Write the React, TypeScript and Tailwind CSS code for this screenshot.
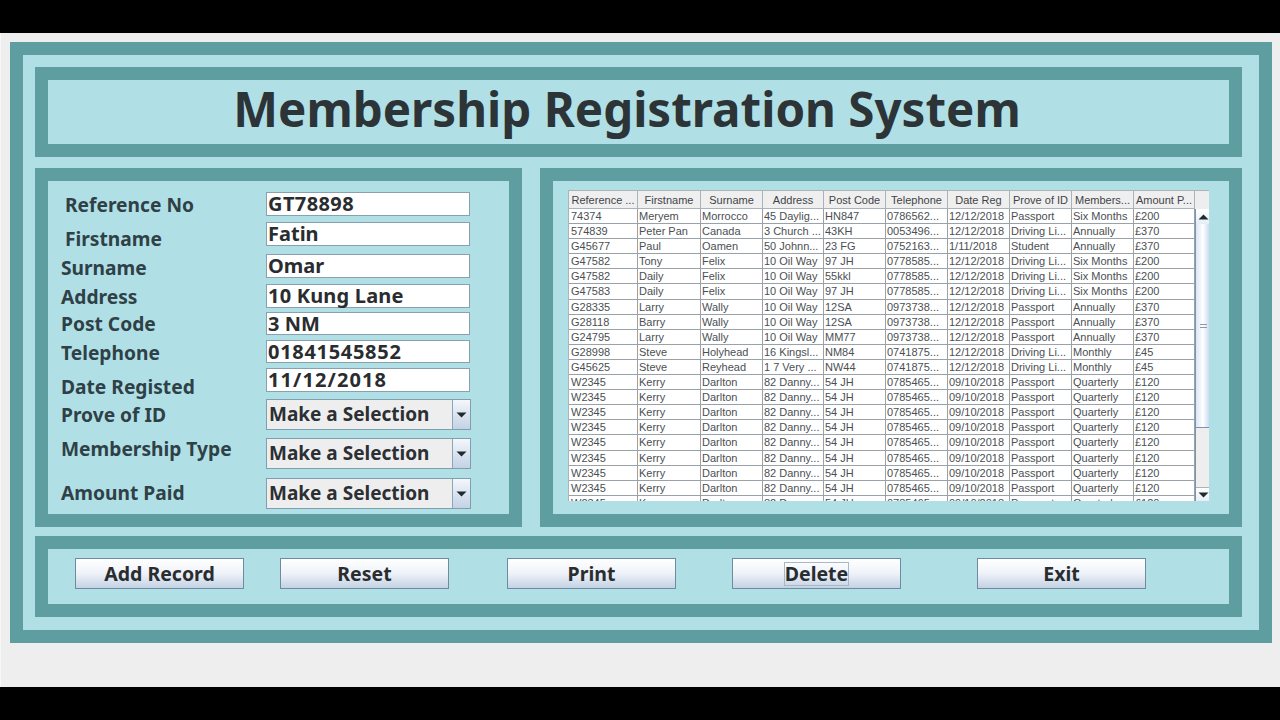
const sans = "font-['Noto_Sans',sans-serif]";

const columns = [
  { name: 'Reference ...', w: 'w-[69px]' },
  { name: 'Firstname', w: 'w-[63px]' },
  { name: 'Surname', w: 'w-[62px]' },
  { name: 'Address', w: 'w-[61px]' },
  { name: 'Post Code', w: 'w-[62px]' },
  { name: 'Telephone', w: 'w-[62px]' },
  { name: 'Date Reg', w: 'w-[62px]' },
  { name: 'Prove of ID', w: 'w-[62px]' },
  { name: 'Members...', w: 'w-[62px]' },
  { name: 'Amount P...', w: 'w-[61px]' },
];

const kerry = ['W2345', 'Kerry', 'Darlton', '82 Danny...', '54 JH', '0785465...', '09/10/2018', 'Passport', 'Quarterly', '£120'];

const rows = [
  ['74374', 'Meryem', 'Morrocco', '45 Daylig...', 'HN847', '0786562...', '12/12/2018', 'Passport', 'Six Months', '£200'],
  ['574839', 'Peter Pan', 'Canada', '3 Church ...', '43KH', '0053496...', '12/12/2018', 'Driving Li...', 'Annually', '£370'],
  ['G45677', 'Paul', 'Oamen', '50 Johnn...', '23 FG', '0752163...', '1/11/2018', 'Student', 'Annually', '£370'],
  ['G47582', 'Tony', 'Felix', '10 Oil Way', '97 JH', '0778585...', '12/12/2018', 'Driving Li...', 'Six Months', '£200'],
  ['G47582', 'Daily', 'Felix', '10 Oil Way', '55kkl', '0778585...', '12/12/2018', 'Driving Li...', 'Six Months', '£200'],
  ['G47583', 'Daily', 'Felix', '10 Oil Way', '97 JH', '0778585...', '12/12/2018', 'Driving Li...', 'Six Months', '£200'],
  ['G28335', 'Larry', 'Wally', '10 Oil Way', '12SA', '0973738...', '12/12/2018', 'Passport', 'Annually', '£370'],
  ['G28118', 'Barry', 'Wally', '10 Oil Way', '12SA', '0973738...', '12/12/2018', 'Passport', 'Annually', '£370'],
  ['G24795', 'Larry', 'Wally', '10 Oil Way', 'MM77', '0973738...', '12/12/2018', 'Passport', 'Annually', '£370'],
  ['G28998', 'Steve', 'Holyhead', '16 Kingsl...', 'NM84', '0741875...', '12/12/2018', 'Driving Li...', 'Monthly', '£45'],
  ['G45625', 'Steve', 'Reyhead', '1 7 Very ...', 'NW44', '0741875...', '12/12/2018', 'Driving Li...', 'Monthly', '£45'],
  kerry, kerry, kerry, kerry, kerry, kerry, kerry, kerry, kerry,
];

const labels = [
  { text: 'Reference No', cls: 'mt-[12px] ml-[4px] h-[24px]' },
  { text: 'Firstname', cls: 'mt-[10px] ml-[4px] h-[24px]' },
  { text: 'Surname', cls: 'mt-[5px] h-[24px]' },
  { text: 'Address', cls: 'mt-[5px] h-[24px]' },
  { text: 'Post Code', cls: 'mt-[3px] h-[24px]' },
  { text: 'Telephone', cls: 'mt-[5px] h-[24px]' },
  { text: 'Date Registed', cls: 'mt-[10px] h-[24px]' },
  { text: 'Prove of ID', cls: 'mt-[4px] h-[24px]' },
  { text: 'Membership Type', cls: 'mt-[10px] h-[24px]' },
  { text: 'Amount Paid', cls: 'mt-[20px] h-[24px]' },
];

const fields = [
  { text: 'GT78898', cls: 'mt-[11px] h-[24px] tracking-[0.4px]' },
  { text: 'Fatin', cls: 'mt-[6px] h-[24px]' },
  { text: 'Omar', cls: 'mt-[8px] h-[24px]' },
  { text: '10 Kung Lane', cls: 'mt-[6px] h-[24px] tracking-[0.2px]' },
  { text: '3 NM', cls: 'mt-[4px] h-[23px]' },
  { text: '01841545852', cls: 'mt-[5px] h-[23px] tracking-[0.7px]' },
  { text: '11/12/2018', cls: 'mt-[5px] h-[24px] tracking-[1.1px]' },
];

const selects = ['mt-[7px]', 'mt-[8px]', 'mt-[9px]'];

const buttons = [
  { text: 'Add Record', cls: 'ml-[27px]' },
  { text: 'Reset', cls: 'ml-[36px]' },
  { text: 'Print', cls: 'ml-[58px]' },
  { text: 'Delete', cls: 'ml-[56px]', focus: true },
  { text: 'Exit', cls: 'ml-[76px]' },
];

function Caret() {
  return (
    <svg width="11" height="6" viewBox="0 0 11 6" className="fill-[#1f2a30]">
      <path d="M0.5 0.5H10.5L5.5 5.5Z" />
    </svg>
  );
}

function Select({ className }: { className: string }) {
  return (
    <div className={`flex h-[31px] w-[205px] border border-[#7f9fb0] bg-[#eeeeee] ${className}`}>
      <div className={`flex-1 pl-[2px] text-[19px] leading-[29px] font-bold whitespace-nowrap text-[#2c2f33] ${sans}`}>Make a Selection</div>
      <div className="flex w-[18px] items-center justify-center border-l border-[#8aa6b8] bg-gradient-to-b from-[#f4f7fb] to-[#c3d2e4]">
        <Caret />
      </div>
    </div>
  );
}

export default function App() {
  return (
    <div className="flex h-[720px] w-[1280px] flex-col overflow-hidden bg-black">
      <div className="mt-[33px] h-[654px] border-l border-[#f8f8f8] bg-[#eeeeee] pt-[9px] pl-[9px]">
        <div className="h-[601px] w-[1262px] border-[13px] border-[#5f9ea0] bg-[#b0e0e6] pt-[12px] pl-[12px]">
          <div className="flex h-[90px] w-[1207px] items-center justify-center border-[13px] border-[#5f9ea0] pr-[23px] pb-[7px]">
            <h1 className={`text-[47.5px] leading-none font-bold text-[#2c3437] ${sans}`}>Membership Registration System</h1>
          </div>

          <div className="mt-[11px] flex items-start">
            <div className="flex h-[359px] w-[487px] border-[13px] border-[#5f9ea0]">
              <div className={`ml-[13px] w-[205px] text-[19.2px] leading-[24px] font-bold text-[#2f4046] ${sans}`}>
                {labels.map((l) => (
                  <div key={l.text} className={l.cls}>{l.text}</div>
                ))}
              </div>
              <div className="flex flex-col">
                {fields.map((f) => (
                  <div
                    key={f.text}
                    className={`w-[204px] border border-[#8aa0ae] bg-white pl-[1px] text-[20px] leading-[21px] font-bold text-[#2a2d30] ${sans} ${f.cls}`}
                  >
                    {f.text}
                  </div>
                ))}
                {selects.map((c) => (
                  <Select key={c} className={c} />
                ))}
              </div>
            </div>

            <div className="ml-[18px] flex h-[359px] w-[702px] border-[13px] border-[#5f9ea0] pt-[9px] pl-[15px]">
              <div className="h-[311px] w-[641px] overflow-hidden border-t border-l border-[#aab4b9] bg-white font-['Liberation_Sans',sans-serif] text-[11px]">
                <div className="flex h-[18px]">
                  {columns.map((c) => (
                    <div
                      key={c.name}
                      className={`${c.w} shrink-0 border-r border-b border-[#a9b4ba] bg-[#efefef] text-center leading-[19px] whitespace-nowrap text-[#3f4448]`}
                    >
                      {c.name}
                    </div>
                  ))}
                  <div className="w-[15px] shrink-0 border-r border-[#aab4b9] bg-[#eeeeee]" />
                </div>
                <div className="flex">
                  <div className="h-[293px] w-[626px] shrink-0 overflow-hidden">
                    {rows.map((row, i) => (
                      <div key={i} className="flex h-[15.1px]">
                        {row.map((cell, j) => (
                          <div
                            key={j}
                            className={`${columns[j].w} shrink-0 overflow-hidden border-r border-b border-[#9aa2a8] leading-[15px] whitespace-nowrap text-[#4b4f53] ${j === 0 ? 'pl-[2px]' : 'pl-[1px]'}`}
                          >
                            {cell}
                          </div>
                        ))}
                      </div>
                    ))}
                  </div>
                  <div className="flex h-[293px] w-[15px] shrink-0 flex-col border-l border-[#7f92b0] bg-[#eeeeee]">
                    <div className="flex h-[15px] items-center justify-center bg-gradient-to-b from-white to-[#e6edf5]">
                      <svg width="11" height="6" viewBox="0 0 11 6" className="fill-[#1f2a30]"><path d="M0.5 5.5H10.5L5.5 0.5Z" /></svg>
                    </div>
                    <div className="flex h-[204px] items-center justify-center border-b border-[#7f92b0] bg-gradient-to-r from-[#dbe6f6] via-white to-[#c6d6ec]">
                      <div className="h-[4px] w-[7px] border-y border-[#8d9aac]" />
                    </div>
                    <div className="flex-1" />
                    <div className="flex h-[15px] items-center justify-center border-t border-[#aab4b9] bg-gradient-to-b from-white to-[#e6edf5]">
                      <Caret />
                    </div>
                  </div>
                </div>
              </div>
            </div>
          </div>

          <div className="mt-[9px] flex h-[81px] w-[1207px] items-center border-[13px] border-[#5f9ea0] pb-[6px]">
            {buttons.map((b) => (
              <button
                key={b.text}
                className={`flex h-[31px] w-[169px] items-center justify-center border border-[#6f8ba0] bg-gradient-to-b from-white via-[#eef2f8] to-[#c3d2e4] text-[19.5px] font-bold text-[#2a2d30] ${sans} ${b.cls}`}
              >
                <span className={b.focus ? 'border border-[#a9b8c6] leading-[22px]' : 'leading-[22px]'}>{b.text}</span>
              </button>
            ))}
          </div>
        </div>
      </div>
    </div>
  );
}
